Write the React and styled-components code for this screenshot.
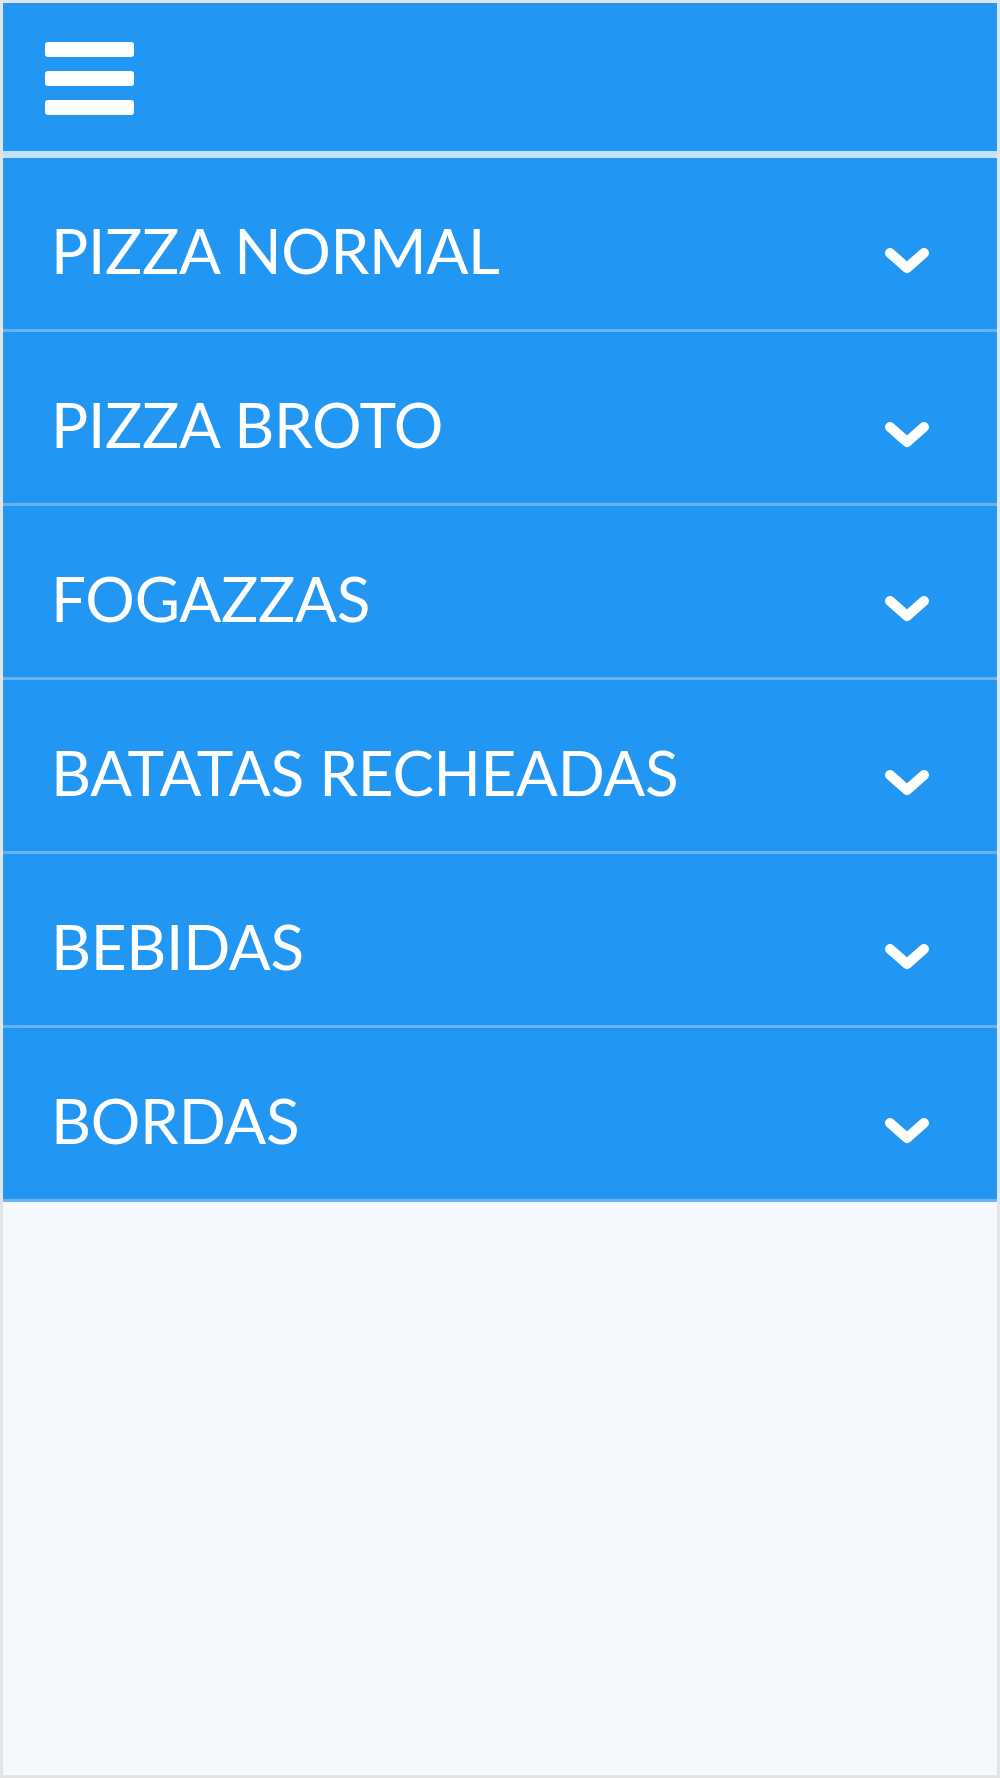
import styled, { createGlobalStyle } from "styled-components";

const GlobalStyle = createGlobalStyle`
  html, body {
    margin: 0;
    padding: 0;
    background: #f5f9fd;
  }
  * {
    box-sizing: border-box;
  }
`;

const Frame = styled.div`
  height: 1778px;
  border: 3px solid #e2e4e6;
  background: #f5f9fd;
  display: flex;
  flex-direction: column;
  font-family: Lato, "Open Sans", sans-serif;
`;

const Header = styled.header`
  height: 155px;
  background: #2196f3;
  border-bottom: 7px solid #c4e1fb;
  display: flex;
  align-items: center;
  padding-left: 42px;
  flex-shrink: 0;
`;

const MenuButton = styled.button`
  background: none;
  border: none;
  padding: 0;
  display: flex;
  flex-direction: column;
  gap: 14px;
  margin-top: 2px;
  cursor: pointer;
`;

const Bar = styled.span`
  display: block;
  width: 89px;
  height: 15px;
  border-radius: 3px;
  background: #fff;
`;

const List = styled.ul`
  list-style: none;
  margin: 0;
  padding: 0;
`;

const Item = styled.li`
  height: 174px;
  background: #2196f3;
  border-bottom: 3px solid #6cb4f1;
  display: flex;
  align-items: center;
  justify-content: space-between;
  padding: 12px 67px 0 48px;
  cursor: pointer;
`;

const Label = styled.span`
  color: #fff;
  font-size: 62px;
  font-weight: 400;
  letter-spacing: -0.3px;
`;

const ChevronWrap = styled.span`
  display: flex;
  margin-top: 24px;
`;

const Chevron = () => (
  <ChevronWrap>
    <svg width="46" height="30" viewBox="0 0 46 30">
      <polyline
        points="6,6 23,21 40,6"
        fill="none"
        stroke="#fff"
        strokeWidth="10"
        strokeLinecap="round"
        strokeLinejoin="round"
      />
    </svg>
  </ChevronWrap>
);

const categories = [
  "PIZZA NORMAL",
  "PIZZA BROTO",
  "FOGAZZAS",
  "BATATAS RECHEADAS",
  "BEBIDAS",
  "BORDAS",
];

export default function App() {
  return (
    <>
      <GlobalStyle />
      <Frame>
        <Header>
          <MenuButton>
            <Bar />
            <Bar />
            <Bar />
          </MenuButton>
        </Header>
        <List>
          {categories.map((c) => (
            <Item key={c}>
              <Label>{c}</Label>
              <Chevron />
            </Item>
          ))}
        </List>
      </Frame>
    </>
  );
}
